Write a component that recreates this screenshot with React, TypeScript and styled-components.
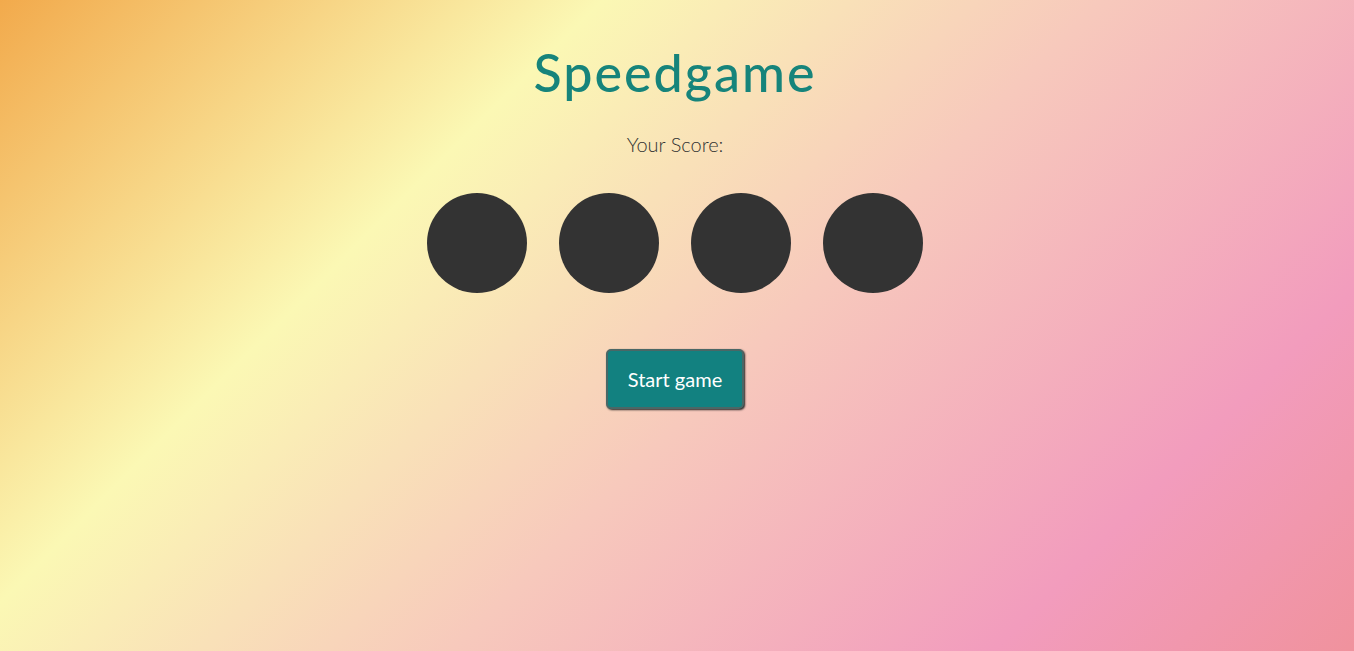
import styled, { createGlobalStyle } from 'styled-components';

const GlobalStyle = createGlobalStyle`
  html, body {
    margin: 0;
    padding: 0;
    height: 100%;
  }

  body {
    font-family: Lato, "Open Sans", sans-serif;
    background: linear-gradient(135deg, #f2aa4c 0%, #fbf8b4 30%, #f7c9bc 55%, #f29cbd 82%, #f0929d 100%);
    background-attachment: fixed;
    min-height: 100vh;
  }
`;

const circles = [1, 2, 3, 4];

export default function App() {
  return (
    <>
      <GlobalStyle />
      <Page>
        <Title>Speedgame</Title>
        <Score>Your Score:</Score>
        <CircleRow>
          {circles.map((id) => (
            <Circle key={id} />
          ))}
        </CircleRow>
        <StartButton>Start game</StartButton>
      </Page>
    </>
  );
}

const Page = styled.main`
  display: flex;
  flex-direction: column;
  align-items: center;
  min-height: 100vh;
  padding: 38px 4px 0 0;
  box-sizing: border-box;
`;

const Title = styled.h1`
  margin: 0;
  font-size: 52px;
  font-weight: 500;
  letter-spacing: 2px;
  line-height: 68px;
  color: #16847b;
`;

const Score = styled.p`
  margin: 25px 0 0;
  font-size: 20px;
  font-weight: 300;
  line-height: 26px;
  color: #333;
`;

const CircleRow = styled.div`
  display: flex;
  gap: 32px;
  margin-top: 36px;
`;

const Circle = styled.div`
  width: 100px;
  height: 100px;
  border-radius: 50%;
  background: #333;
`;

const StartButton = styled.button`
  margin-top: 56px;
  width: 138px;
  height: 60px;
  font-family: inherit;
  font-size: 20px;
  color: #fff;
  background: #128180;
  border: 2px solid #4a6766;
  border-radius: 5px;
  box-shadow: 1px 1px 2px #222;
  cursor: pointer;
`;
